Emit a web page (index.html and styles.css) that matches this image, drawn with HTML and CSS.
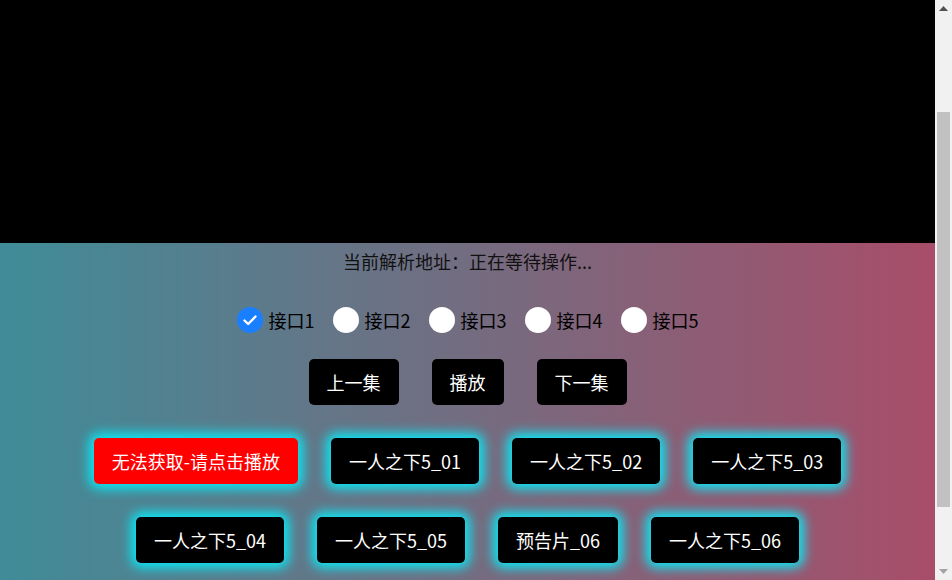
FILE: index.html
```html
<!DOCTYPE html>
<html lang="zh-CN">
<head>
<meta charset="utf-8">
<title>一人之下5</title>
<link rel="stylesheet" href="styles.css">
</head>
<body>
<div class="page" id="page">
  <div class="player"></div>
  <main class="panel">
    <p class="status">当前解析地址：正在等待操作...</p>
    <div class="sources">
      <label class="source"><span class="dot checked"><svg viewBox="0 0 26 26" width="26" height="26"><path d="M7.5 13.5 L11.2 17 L18.5 9.5" fill="none" stroke="#fff" stroke-width="2.4" stroke-linecap="round" stroke-linejoin="round"/></svg></span>接口1</label>
      <label class="source"><span class="dot"></span>接口2</label>
      <label class="source"><span class="dot"></span>接口3</label>
      <label class="source"><span class="dot"></span>接口4</label>
      <label class="source"><span class="dot"></span>接口5</label>
    </div>
    <div class="nav">
      <button class="btn">上一集</button>
      <button class="btn">播放</button>
      <button class="btn">下一集</button>
    </div>
    <div class="episodes">
      <button class="btn ep ep-error">无法获取-请点击播放</button>
      <button class="btn ep">一人之下5_01</button>
      <button class="btn ep">一人之下5_02</button>
      <button class="btn ep">一人之下5_03</button>
    </div>
    <div class="episodes">
      <button class="btn ep">一人之下5_04</button>
      <button class="btn ep">一人之下5_05</button>
      <button class="btn ep">预告片_06</button>
      <button class="btn ep">一人之下5_06</button>
    </div>
  </main>
</div>
<div class="scrollbar" aria-hidden="true">
  <div class="sb-btn"><svg width="9" height="5" viewBox="0 0 9 5"><path d="M0 5 L4.5 0 L9 5 Z" fill="#505050"/></svg></div>
  <div class="sb-track"><div class="sb-thumb"></div></div>
  <div class="sb-btn"><svg width="9" height="5" viewBox="0 0 9 5"><path d="M0 0 L4.5 5 L9 0 Z" fill="#a3a3a3"/></svg></div>
</div>
<script src="script.js"></script>
</body>
</html>
```
FILE: styles.css
```css
html, body {
  margin: 0;
  padding: 0;
  height: 100%;
  overflow: hidden;
}
body {
  display: flex;
  font-family: "Microsoft YaHei", "Noto Sans CJK SC", "Noto Sans", sans-serif;
  font-size: 18px;
  color: #000;
}
.page {
  flex: 1;
  height: 100vh;
  overflow-y: scroll;
  scrollbar-width: none;
  background: linear-gradient(to right, #3f8c98, #a84d69);
}
.page::-webkit-scrollbar {
  display: none;
}
.scrollbar {
  width: 17px;
  height: 100vh;
  flex: none;
  display: flex;
  flex-direction: column;
  background: #f1f1f1;
}
.sb-btn {
  height: 17px;
  flex: none;
  display: flex;
  align-items: center;
  justify-content: center;
}
.sb-btn svg {
  display: block;
}
.sb-track {
  flex: 1;
  padding: 0 2px;
}
.sb-thumb {
  margin-top: 95px;
  height: 395px;
  background: #c1c1c1;
}
.player {
  height: 383px;
  background: #000;
}
.panel {
  display: flex;
  flex-direction: column;
  align-items: center;
  padding: 6px 0 100px;
}
.status {
  margin: 0;
  line-height: 24px;
  font-size: 18px;
  color: #111;
}
.sources {
  display: flex;
  align-items: center;
  gap: 18px;
  margin-top: 34px;
  height: 26px;
}
.source {
  display: flex;
  align-items: center;
  gap: 6px;
  line-height: 24px;
}
.dot {
  width: 26px;
  height: 26px;
  border-radius: 50%;
  background: #fff;
  display: block;
}
.dot svg {
  display: block;
}
.dot.checked {
  background: #1a7fff;
}
.nav, .episodes {
  display: flex;
  justify-content: center;
  gap: 33px;
}
.nav {
  margin-top: 26px;
}
.episodes {
  margin-top: 33px;
}
.btn {
  font-family: inherit;
  font-size: 18px;
  line-height: 24px;
  color: #fff;
  background: #000;
  border: none;
  border-radius: 5px;
  padding: 11px 18px;
  cursor: pointer;
  white-space: nowrap;
}
.ep {
  box-shadow: 0 0 12px 5px #0ae8f5;
}
.ep-error {
  background: #ff0000;
}
```
FILE: script.js
```js
document.getElementById('page').scrollTop = 140;
```
